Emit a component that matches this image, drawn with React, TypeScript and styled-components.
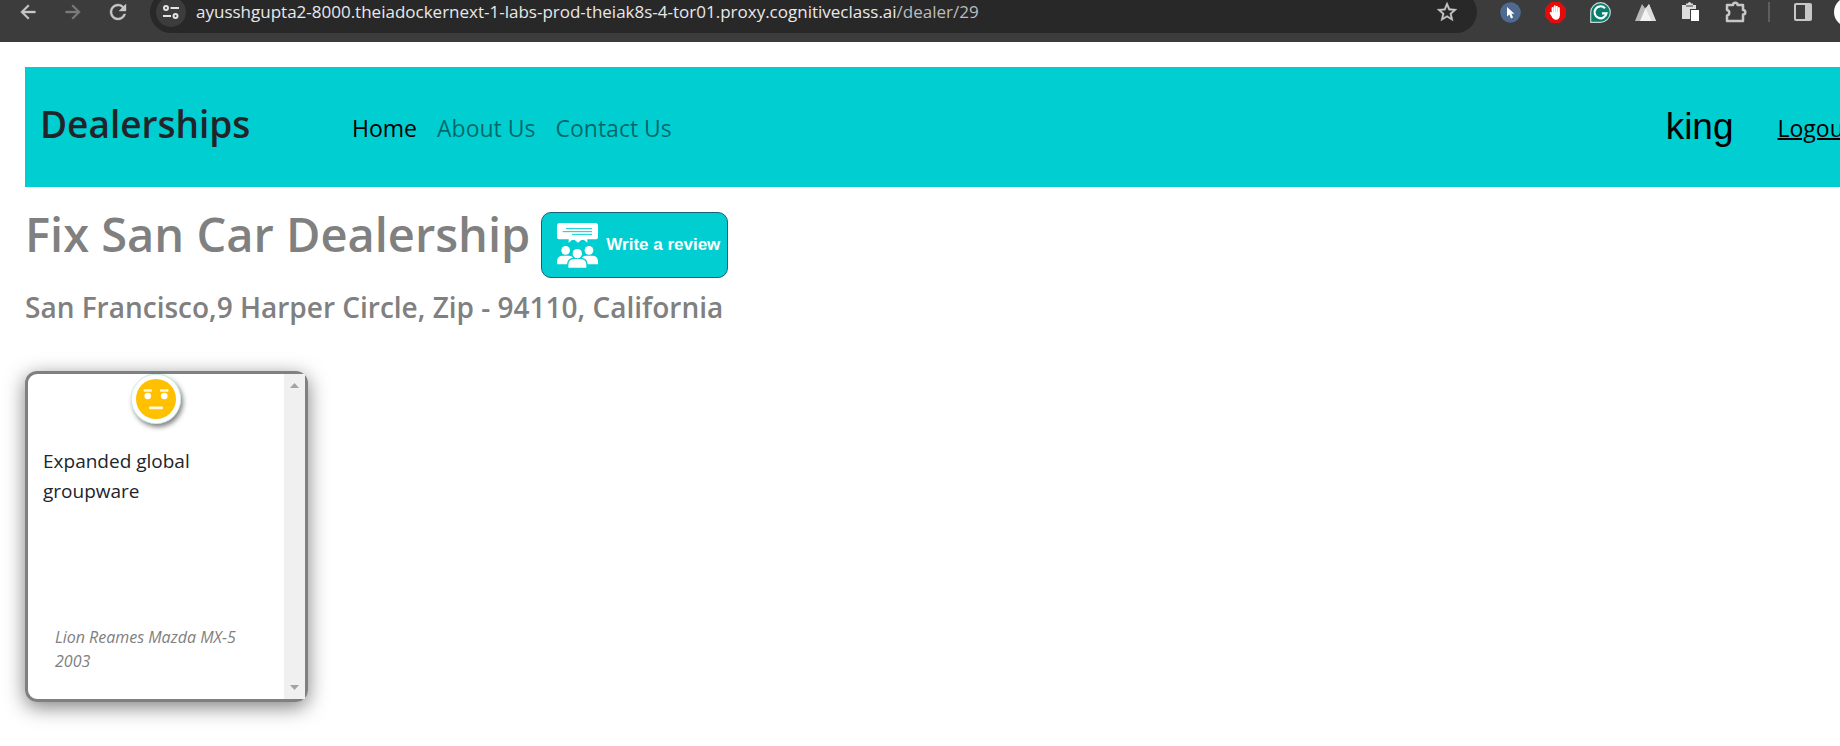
import React from 'react';
import styled, { createGlobalStyle } from 'styled-components';

const GlobalStyle = createGlobalStyle`
  *, *::before, *::after { box-sizing: border-box; }
  body {
    margin: 0;
    background: #fff;
    color: #212529;
    font-family: 'Segoe UI', 'Open Sans', 'Noto Sans', sans-serif;
    overflow-x: hidden;
  }
  h1, h2, p { margin: 0; }
  button { font: inherit; border: 0; padding: 0; background: none; color: inherit; cursor: pointer; }
  svg { display: block; flex: none; }
`;

const Toolbar = styled.header`
  display: flex;
  align-items: flex-end;
  height: 42px;
  padding: 0 0 9px 5px;
  background: #3c3c3c;
  overflow: hidden;
`;

const Slot = styled.button<{ $dim?: boolean }>`
  display: flex;
  align-items: center;
  justify-content: center;
  flex: none;
  width: 45px;
  height: 42px;
  color: ${(p) => (p.$dim ? '#7b7b7b' : '#c7c7c7')};
`;

const AddressBar = styled.div`
  display: flex;
  align-items: center;
  flex: 1;
  min-width: 0;
  height: 42px;
  margin-left: 10px;
  padding: 0 8px 0 6px;
  border-radius: 21px;
  background: #282828;
`;

const SiteInfo = styled.button`
  display: flex;
  align-items: center;
  justify-content: center;
  flex: none;
  width: 30px;
  height: 30px;
  margin-right: 10px;
  border-radius: 50%;
  background: #3c3c3c;
  color: #e3e3e3;
`;

const Url = styled.div`
  flex: 1;
  min-width: 0;
  overflow: hidden;
  white-space: nowrap;
  font-size: 17px;
  line-height: 24px;
  color: #e8e8e8;
  span { color: #bdbdbd; }
`;

const Extensions = styled.div`
  display: flex;
  align-items: center;
  flex: none;
  padding-left: 11px;
`;

const Divider = styled.span`
  width: 2px;
  height: 20px;
  margin: 0 10px;
  background: #5e5e5e;
`;

const Avatar = styled.button`
  width: 30px;
  height: 30px;
  margin: 0 -24px 0 9px;
  border-radius: 50%;
  background: #fff;
`;

const Page = styled.main`
  padding: 25px 0 40px 25px;
`;

const NavBar = styled.nav`
  display: flex;
  align-items: center;
  height: 120px;
  margin-right: -25px;
  padding: 0 3px 0 15px;
  background: #00ced1;
`;

const Brand = styled.h2`
  width: 302px;
  padding-bottom: 6px;
  font-size: 37px;
  line-height: 48px;
  font-weight: 600;
`;

const NavLink = styled.a<{ $active?: boolean }>`
  padding: 2px 10px 0;
  font-size: 23px;
  line-height: 36px;
  text-decoration: none;
  color: ${(p) => (p.$active ? '#000' : 'rgba(0, 0, 0, 0.5)')};
`;

const Account = styled.div`
  display: flex;
  align-items: center;
  gap: 34px;
  margin-left: auto;
`;

const UserName = styled.span`
  font-family: Arial, 'Liberation Sans', sans-serif;
  font-size: 37px;
  line-height: 44px;
  color: #000;
`;

const Logout = styled(NavLink)`
  text-decoration: underline;
  text-decoration-thickness: 2px;
`;

const TitleRow = styled.div`
  display: flex;
  align-items: flex-start;
  gap: 11px;
  padding-top: 17px;
  color: grey;
`;

const DealerName = styled.h1`
  font-size: 47px;
  line-height: 60px;
  font-weight: 600;
`;

const ReviewLink = styled.a`
  display: flex;
  align-items: center;
  gap: 8px;
  width: 187px;
  height: 66px;
  margin-top: 8px;
  padding-left: 15px;
  border: 1px solid #17607a;
  border-radius: 10px;
  background: #00ced1;
  color: #fff;
  font: bold 17px/24px Arial, 'Liberation Sans', sans-serif;
  text-decoration: none;
  white-space: nowrap;
`;

const Address = styled.p`
  padding-top: 11px;
  font-size: 28px;
  line-height: 36px;
  font-weight: 600;
  color: grey;
`;

const ReviewCard = styled.article`
  display: flex;
  width: 283px;
  height: 331px;
  margin-top: 46px;
  border: 3px solid grey;
  border-radius: 12px;
  box-shadow: 0 5px 20px rgba(0, 0, 0, 0.5);
`;

const ReviewBody = styled.div`
  display: flex;
  flex-direction: column;
  flex: 1;
`;

const Sentiment = styled.div`
  align-self: center;
  width: 50px;
  height: 50px;
  border-radius: 50%;
  background: #fff;
  box-shadow: 2px 3px 5px rgba(0, 0, 0, 0.5);
`;

const ReviewText = styled.p`
  padding: 22px 40px 0 15px;
  font-size: 19px;
  line-height: 30px;
`;

const Reviewer = styled.p`
  margin-top: auto;
  padding: 0 27px 26px;
  font-size: 16px;
  line-height: 24px;
  font-style: italic;
  color: grey;
`;

const ScrollTrack = styled.div`
  display: flex;
  flex-direction: column;
  justify-content: space-between;
  align-items: center;
  width: 21px;
  padding: 9px 0;
  background: #f0f0f0;
`;

const BackIcon = ({ flip = false }: { flip?: boolean }) => (
  <svg width="22" height="22" viewBox="0 0 24 24" fill="currentColor" transform={flip ? 'scale(-1 1)' : undefined}>
    <path d="M20 11H7.83l5.59-5.59L12 4l-8 8 8 8 1.41-1.41L7.83 13H20v-2z" stroke="currentColor" strokeWidth=".5" />
  </svg>
);

const ReloadIcon = () => (
  <svg width="24" height="24" viewBox="0 0 24 24" fill="currentColor">
    <path d="M17.65 6.35A7.96 7.96 0 0 0 12 4a8 8 0 1 0 7.73 10h-2.08A6 6 0 1 1 12 6c1.66 0 3.14.69 4.22 1.78L13 11h7V4z" stroke="currentColor" strokeWidth=".4" />
  </svg>
);

const TuneIcon = () => (
  <svg width="16" height="14" viewBox="0 0 16 14" fill="none" stroke="currentColor" strokeWidth="2">
    <circle cx="3" cy="3" r="2" />
    <path d="M7.500 3H16M0 11h8" />
    <circle cx="12.500" cy="11" r="2" />
  </svg>
);

const StarIcon = () => (
  <svg width="24" height="24" viewBox="0 0 24 24" fill="currentColor">
    <path d="m22 9.240-7.190-.62L12 2 9.190 8.630 2 9.240l5.460 4.730L5.820 21 12 17.270 18.180 21l-1.630-7.030zM12 15.400l-3.760 2.270 1-4.280-3.320-2.880 4.380-.38L12 6.100l1.710 4.040 4.380.38-3.320 2.880 1 4.280z" stroke="currentColor" strokeWidth=".3" />
  </svg>
);

const CursorIcon = () => (
  <svg width="21" height="21" viewBox="0 0 21 21">
    <circle cx="10.500" cy="10.500" r="10.300" fill="#4f6a90" />
    <path d="M7 5v9.500l2.300-2 1.700 4 2.100-.9-1.700-3.900h3z" fill="#fff" />
  </svg>
);

const BlockerIcon = () => (
  <svg width="21" height="21" viewBox="0 0 21 21">
    <path d="M6.200 0h8.600L21 6.200v8.600L14.800 21H6.200L0 14.800V6.200z" fill="#e60b0b" />
    <g stroke="#fff" strokeWidth="1.900" strokeLinecap="round" fill="none">
      <path d="M7.600 6v7M9.700 4.300V12M11.800 4.600V12M13.900 6v7M5.600 11l2.600 4" />
    </g>
    <path d="M6.700 10h8.100v3.500c0 2.500-1.500 4.200-3.800 4.200-2.500 0-4.300-2.200-4.300-4.500z" fill="#fff" />
  </svg>
);

const GrammarIcon = () => (
  <svg width="21" height="21" viewBox="0 0 21 21">
    <path d="M.7 20.300V10.500a9.800 9.800 0 1 1 9.800 9.800z" fill="#0a7d6c" stroke="#c5d8d3" strokeWidth="1.200" />
    <path d="M15 6.200a6 6 0 1 0 1.500 5.100H12" fill="none" stroke="#fff" strokeWidth="2.200" />
  </svg>
);

const PeaksIcon = () => (
  <svg width="21" height="18" viewBox="0 0 21 18">
    <path d="M0 18 7 1l3.500 5L14 1l7 17z" fill="#b9b9b9" />
    <path d="M5 18 11 4l6 14z" fill="#f3f3f3" />
    <path d="m10.500 5.500 3.500-4.500 7 17h-4z" fill="#dcdcdc" />
  </svg>
);

const ClipboardIcon = () => (
  <svg width="18" height="20" viewBox="0 0 18 20">
    <path d="M0 3h4V1.500h2a1.500 1.500 0 0 1 3 0h2V3h3v4H8v10H0z" fill="#ddd" />
    <path d="M4 3h7v2H4z" fill="#8b8b8b" />
    <path d="M9 8h8v11H9z" fill="#fff" />
  </svg>
);

const PuzzleIcon = () => (
  <svg width="22" height="22" viewBox="0 0 22 22" fill="none" stroke="currentColor" strokeWidth="2.500" strokeLinejoin="round">
    <path d="M2 4h6a2.300 2.300 0 0 1 4.600 0H18v5a2.200 2.200 0 0 1 0 4.600V20H2v-5.500a2.800 2.800 0 0 0 0-5.500z" />
  </svg>
);

const PanelIcon = () => (
  <svg width="18" height="18" viewBox="0 0 18 18">
    <rect x="1" y="1" width="16" height="16" rx="1" fill="none" stroke="currentColor" strokeWidth="2" />
    <path d="M11 1h6v16h-6z" fill="currentColor" />
  </svg>
);

const AudienceIcon = () => (
  <svg width="41" height="45" viewBox="0 0 123 135" fill="#fff">
    <path d="M8 0h107q8 0 8 8v33q0 8-8 8H91v10l-10-8-8 0-10 8-10-8-8 0-10 8V49H8q-8 0-8-8V8q0-8 8-8z" />
    <path d="M27 17h78M17 26h88M45 34h60" stroke="#00ced1" strokeWidth="3" />
    <circle cx="26" cy="82" r="13" />
    <circle cx="96" cy="82" r="13" />
    <path d="M0 124v-9q0-17 18-17h16q18 0 18 17v9zM71 124v-9q0-17 18-17h16q18 0 18 17v9z" />
    <path d="M34 134v-8q0-18 18-18h18q18 0 18 18v8z" stroke="#00ced1" strokeWidth="8" />
    <circle cx="61" cy="92" r="18" fill="#00ced1" />
    <path d="M34 134v-8q0-18 18-18h18q18 0 18 18v8z" />
    <circle cx="61" cy="92" r="14" />
  </svg>
);

const NeutralFace = () => (
  <svg width="50" height="50" viewBox="0 0 50 50" role="img" aria-label="neutral">
    <circle cx="25" cy="25" r="24.700" fill="none" stroke="#a8e3d4" strokeWidth=".6" />
    <circle cx="25" cy="25" r="20" fill="#ffc000" />
    <g fill="#fff">
      <circle cx="16.700" cy="22" r="3.300" />
      <circle cx="33.300" cy="22" r="3.300" />
      <rect x="12.500" y="15.300" width="8.500" height="2.500" rx="1" opacity=".85" />
      <rect x="29" y="15.300" width="8.500" height="2.500" rx="1" opacity=".85" />
      <rect x="18" y="32.400" width="14" height="2.800" rx="1" opacity=".9" />
    </g>
  </svg>
);

const Arrow = ({ d }: { d: string }) => (
  <svg width="9" height="5" viewBox="0 0 9 5" fill="#a3a3a3" aria-hidden="true">
    <path d={d} />
  </svg>
);

const extensions = [
  { label: 'Cursor', Icon: CursorIcon },
  { label: 'Ad blocker', Icon: BlockerIcon },
  { label: 'Grammar', Icon: GrammarIcon },
  { label: 'Peaks', Icon: PeaksIcon },
  { label: 'Clipboard', Icon: ClipboardIcon },
  { label: 'Extensions', Icon: PuzzleIcon },
];

export default function App() {
  return (
    <>
      <GlobalStyle />
      <Toolbar>
        <Slot aria-label="Back"><BackIcon /></Slot>
        <Slot aria-label="Forward" $dim><BackIcon flip /></Slot>
        <Slot aria-label="Reload"><ReloadIcon /></Slot>
        <AddressBar>
          <SiteInfo aria-label="Site information"><TuneIcon /></SiteInfo>
          <Url>
            ayusshgupta2-8000.theiadockernext-1-labs-prod-theiak8s-4-tor01.proxy.cognitiveclass.ai<span>/dealer/29</span>
          </Url>
          <Slot aria-label="Bookmark"><StarIcon /></Slot>
        </AddressBar>
        <Extensions>
          {extensions.map(({ label, Icon }) => (
            <Slot key={label} aria-label={label}><Icon /></Slot>
          ))}
          <Divider />
          <Slot aria-label="Side panel"><PanelIcon /></Slot>
          <Avatar aria-label="Profile" />
        </Extensions>
      </Toolbar>
      <Page>
        <NavBar>
          <Brand>Dealerships</Brand>
          <NavLink href="#home" $active>Home</NavLink>
          <NavLink href="#about">About Us</NavLink>
          <NavLink href="#contact">Contact Us</NavLink>
          <Account>
            <UserName>king</UserName>
            <Logout href="#logout" $active>Logout</Logout>
          </Account>
        </NavBar>
        <TitleRow>
          <DealerName>Fix San Car Dealership</DealerName>
          <ReviewLink href="#review">
            <AudienceIcon />
            Write a review
          </ReviewLink>
        </TitleRow>
        <Address>San Francisco,9 Harper Circle, Zip - 94110, California</Address>
        <ReviewCard>
          <ReviewBody>
            <Sentiment><NeutralFace /></Sentiment>
            <ReviewText>Expanded global groupware</ReviewText>
            <Reviewer>Lion Reames Mazda MX-5 2003</Reviewer>
          </ReviewBody>
          <ScrollTrack>
            <Arrow d="M0 5 4.500 0 9 5z" />
            <Arrow d="M0 0h9L4.500 5z" />
          </ScrollTrack>
        </ReviewCard>
      </Page>
    </>
  );
}
